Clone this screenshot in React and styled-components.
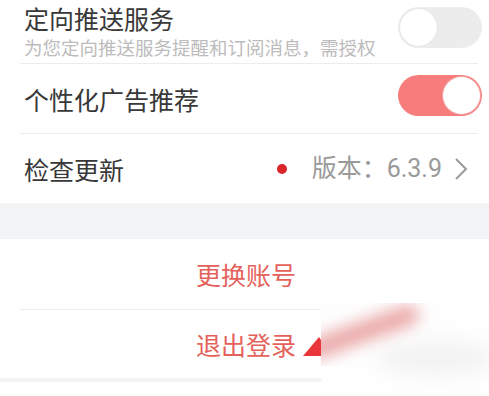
import React, { useState } from "react";
import styled, { createGlobalStyle } from "styled-components";

const GlobalStyle = createGlobalStyle`
  html, body {
    margin: 0;
    padding: 0;
    background: #ffffff;
  }
  body {
    font-family: "Noto Sans CJK SC", "Noto Sans", sans-serif;
    width: 489px;
    height: 396px;
    overflow: hidden;
  }
`;

const Page = styled.div`
  width: 489px;
  display: flex;
  flex-direction: column;
  background: #fff;
`;

const Section = styled.div`
  position: relative;
  display: flex;
  flex-direction: column;
  background: #fff;
`;

const Row = styled.div`
  display: flex;
  align-items: ${(p) => p.$align || "center"};
  justify-content: space-between;
  height: ${(p) => p.$h}px;
  padding: ${(p) => p.$pt || 0}px 7px 0 24px;
  box-sizing: border-box;
`;

const ActionRow = styled.div`
  display: flex;
  align-items: center;
  justify-content: center;
  height: ${(p) => p.$h}px;
  padding-left: 3px;
`;

const TextBlock = styled.div`
  display: flex;
  flex-direction: column;
`;

const Title = styled.div`
  font-size: 25px;
  line-height: 30px;
  color: #383838;
`;

const Sub = styled.div`
  font-size: 18.5px;
  line-height: 22px;
  color: #bcbcbc;
  margin-top: 3px;
`;

const Divider = styled.div`
  height: 1px;
  background: #ececec;
  margin: 0 ${(p) => p.$right || 11}px 0 20px;
`;

const Track = styled.button`
  position: relative;
  width: 84px;
  height: 41px;
  border: none;
  padding: 0;
  border-radius: 21px;
  background: ${(p) => (p.$on ? "#f77c7c" : "#ececec")};
  cursor: pointer;
  flex-shrink: 0;
  margin-top: ${(p) => p.$top || 0}px;
`;

const Knob = styled.span`
  position: absolute;
  top: 2px;
  left: ${(p) => (p.$on ? "45px" : "2px")};
  width: 37px;
  height: 37px;
  border-radius: 50%;
  background: #fff;
  box-shadow: ${(p) => (p.$on ? "0 0 0 1px #f5a0a0" : "0 0 0 1px #e6e6e6")};
`;

const Right = styled.div`
  display: flex;
  align-items: center;
  margin-right: 14px;
`;

const Dot = styled.span`
  width: 10px;
  height: 10px;
  border-radius: 50%;
  background: #d9262b;
  margin-right: 25px;
`;

const Version = styled.span`
  font-family: Roboto, "Noto Sans CJK SC", sans-serif;
  font-size: 25px;
  line-height: 30px;
  color: #9a9a9a;
  margin-right: 12px;
`;

const Band = styled.div`
  height: ${(p) => p.$h}px;
  background: #f2f4f5;
`;

const Action = styled.div`
  font-size: 25px;
  line-height: 30px;
  color: #e4625b;
`;

const Overlay = styled.div`
  position: absolute;
  left: 321px;
  top: 64px;
  width: 168px;
  height: 100px;
  background: #fefefe;
  overflow: hidden;
`;

const ArrowHead = styled.svg`
  position: absolute;
  left: 300px;
  top: 97px;
`;

const Toggle = ({ initial, top }) => {
  const [on, setOn] = useState(initial);
  return (
    <Track $on={on} $top={top} onClick={() => setOn(!on)}>
      <Knob $on={on} />
    </Track>
  );
};

const Chevron = () => (
  <svg width="14" height="24" viewBox="0 0 14 24">
    <polyline points="2,2 12,12 2,22" fill="none" stroke="#9a9a9a" strokeWidth="2" />
  </svg>
);

export default function App() {
  return (
    <Page>
      <GlobalStyle />
      <Section>
        <Row $h={63} $align="flex-start" $pt={3}>
          <TextBlock>
            <Title>定向推送服务</Title>
            <Sub>为您定向推送服务提醒和订阅消息，需授权</Sub>
          </TextBlock>
          <Toggle initial={false} top={4} />
        </Row>
        <Divider />
        <Row $h={69}>
          <Title>个性化广告推荐</Title>
          <Toggle initial={true} top={-6} />
        </Row>
        <Divider />
        <Row $h={69}>
          <Title>检查更新</Title>
          <Right>
            <Dot />
            <Version>版本：6.3.9</Version>
            <Chevron />
          </Right>
        </Row>
      </Section>
      <Band $h={36} />
      <Section>
        <ActionRow $h={70}>
          <Action>更换账号</Action>
        </ActionRow>
        <Divider $right={0} />
        <ActionRow $h={68}>
          <Action>退出登录</Action>
        </ActionRow>
        <ArrowHead width="22" height="22" viewBox="0 0 22 22">
          <polygon points="3,20 19,1 21,4 21,20" fill="#e8363a" />
        </ArrowHead>
        <Overlay>
          <svg width="168" height="100" viewBox="0 0 168 100">
            <defs>
              <filter id="soft" x="-50%" y="-50%" width="200%" height="200%">
                <feGaussianBlur stdDeviation="8" />
              </filter>
              <filter id="softer" x="-50%" y="-50%" width="200%" height="200%">
                <feGaussianBlur stdDeviation="10" />
              </filter>
            </defs>
            <ellipse cx="115" cy="55" rx="60" ry="16" fill="#f2f2f2" filter="url(#softer)" />
            <line x1="-6" y1="46" x2="88" y2="12" stroke="#eaa6a6" strokeWidth="20" strokeLinecap="round" filter="url(#soft)" />
          </svg>
        </Overlay>
      </Section>
      <Band $h={4} />
    </Page>
  );
}
